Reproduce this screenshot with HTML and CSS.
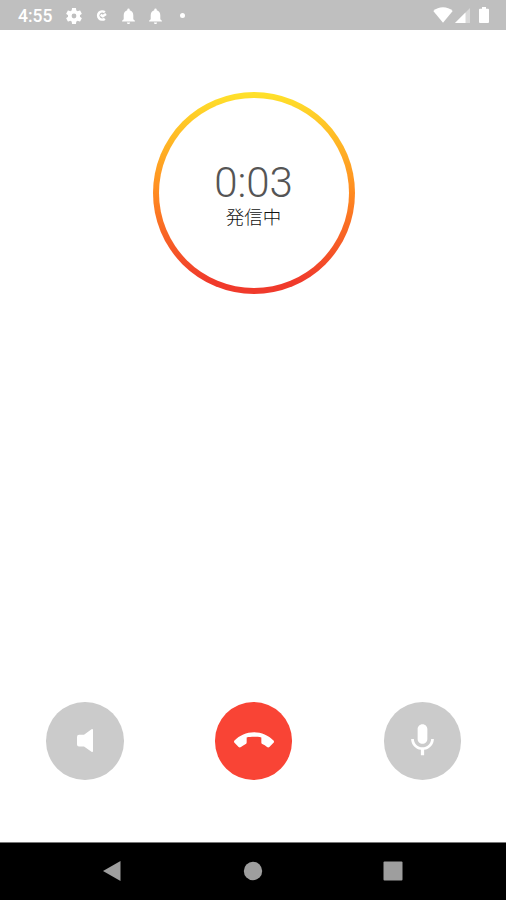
FILE: index.html
```html
<!DOCTYPE html>
<html lang="ja">
<head>
<meta charset="utf-8">
<title>発信中</title>
<link rel="stylesheet" href="styles.css">
</head>
<body>
<div class="phone">
  <header class="status">
    <span class="clock">4:55</span>
    <svg class="gear" viewBox="2 2 20 20"><path d="M19.43 12.98c.04-.32.07-.64.07-.98s-.03-.66-.07-.98l2.11-1.65c.19-.15.24-.42.12-.64l-2-3.46c-.12-.22-.39-.3-.61-.22l-2.49 1c-.52-.4-1.08-.73-1.69-.98l-.38-2.65C14.46 2.18 14.25 2 14 2h-4c-.25 0-.46.18-.49.42l-.38 2.65c-.61.25-1.17.59-1.69.98l-2.49-1c-.23-.09-.49 0-.61.22l-2 3.46c-.13.22-.07.49.12.64l2.11 1.65c-.04.32-.07.65-.07.98s.03.66.07.98l-2.11 1.65c-.19.15-.24.42-.12.64l2 3.46c.12.22.39.3.61.22l2.49-1c.52.4 1.08.73 1.69.98l.38 2.65c.03.24.24.42.49.42h4c.25 0 .46-.18.49-.42l.38-2.65c.61-.25 1.17-.59 1.69-.98l2.49 1c.23.09.49 0 .61-.22l2-3.46c.12-.22.07-.49-.12-.64l-2.11-1.65zM12 15a3 3 0 1 1 0-6 3 3 0 0 1 0 6z"/></svg>
    <svg class="app" viewBox="0 0 11 13"><path d="M8.800 3.300A4.100 4.100 0 1 0 8.800 9.700M4.600 5.700l2.200 1.500 3.200-2.300" fill="none" stroke="#fff" stroke-width="2.500"/></svg>
    <svg class="bell first" viewBox="4 2 16 20"><path d="M12 22c1.100 0 2-.9 2-2h-4c0 1.100.89 2 2 2zm6-6v-5c0-3.070-1.640-5.640-4.500-6.320V4a1.500 1.500 0 0 0-3 0v.68C7.630 5.360 6 7.920 6 11v5l-2 2v1h16v-1z"/></svg>
    <svg class="bell" viewBox="4 2 16 20"><path d="M12 22c1.100 0 2-.9 2-2h-4c0 1.100.89 2 2 2zm6-6v-5c0-3.070-1.640-5.640-4.500-6.320V4a1.500 1.500 0 0 0-3 0v.68C7.630 5.360 6 7.920 6 11v5l-2 2v1h16v-1z"/></svg>
    <span class="dot"></span>
    <svg class="wifi" viewBox="0 0 20 16"><path d="M.3 4Q4.500.3 10 .3T19.700 4L10 15.700z"/></svg>
    <svg class="signal" viewBox="0 0 15 15"><path d="M15 0v15H0z" opacity=".4"/><path d="M10.500 4.500V15H0z"/></svg>
    <svg class="battery" viewBox="0 0 10 16"><path d="M3 0h4v1.700h2q1 0 1 1V15q0 1-1 1H1q-1 0-1-1V2.700q0-1 1-1h2z"/></svg>
  </header>
  <main class="call">
    <section class="ring">
      <div class="info">
        <div class="timer">0:03</div>
        <div class="state">発信中</div>
      </div>
    </section>
    <div class="actions">
      <button class="action" aria-label="スピーカー"><svg class="speaker" viewBox="0 0 16 23"><path d="M2 5.800h5L14.500.3Q16-.3 16 1v21q0 1.300-1.500.7L7 17.500H2q-2 0-2-2V8q0-2.200 2-2.200z"/></svg></button>
      <button class="action end" aria-label="終了"><svg class="hangup" viewBox="0 0 24 24"><path d="M12 9.500c-1.600 0-3.150.1-4.400.4v3c0 .39-.23.74-.56.9-.98.49-2.070 1.120-2.860 1.850-.18.18-.43.28-.7.28-.28 0-.53-.11-.71-.29L.29 13.080a.96.96 0 0 1-.29-.7c0-.28.11-.53.29-.71C3.340 8.580 7.460 6.700 12 6.700s8.660 1.880 11.710 4.970c.18.18.29.43.29.71s-.11.53-.29.71l-2.480 2.550c-.18.18-.43.29-.71.29-.27 0-.52-.11-.7-.28a11.270 11.270 0 0 0-2.860-1.850.99.99 0 0 1-.56-.9v-3C15.150 9.600 13.600 9.500 12 9.500z"/></svg></button>
      <button class="action" aria-label="マイク"><svg class="mic" viewBox="0 0 24 24"><path d="M12 14c1.660 0 2.990-1.340 2.990-3L15 5c0-1.660-1.340-3-3-3S9 3.340 9 5v6c0 1.660 1.340 3 3 3zm5.300-3c0 3-2.540 5.100-5.300 5.100S6.700 14 6.700 11H5c0 3.410 2.720 6.230 6 6.720V21h2v-3.280c3.280-.48 6-3.300 6-6.720h-1.700z"/></svg></button>
    </div>
  </main>
  <nav class="nav">
    <svg viewBox="0 0 20 22"><path d="M18.500 1v20L1 11z"/></svg>
    <svg viewBox="0 0 20 22"><circle cx="10" cy="11" r="9.200"/></svg>
    <svg viewBox="0 0 20 22"><rect x=".5" y="1.500" width="19" height="19" rx="1"/></svg>
  </nav>
</div>
</body>
</html>
```
FILE: styles.css
```css
* { box-sizing: border-box; }
body { margin: 0; background: #fff; font-family: Roboto, "Noto Sans CJK JP", sans-serif; }
svg { display: block; fill: #fff; flex: none; }
.phone { width: 506px; height: 900px; display: flex; flex-direction: column; }
.status { height: 30px; flex: none; background: #bfbfbf; display: flex; align-items: center; padding: 0 17px 0 18px; }
.clock { width: 48px; color: #fff; font-size: 17.500px; font-weight: 500; line-height: 30px; padding-top: 2px; }
.gear { width: 16px; height: 16px; margin-top: 1px; }
.app { width: 11px; height: 13px; margin: 1px 0 0 14px; }
.bell { width: 13px; height: 16px; margin: 1px 0 0 14px; }
.bell.first { margin-left: 15px; }
.dot { width: 5px; height: 5px; border-radius: 50%; background: #fff; margin-left: 18px; }
.wifi { width: 20px; height: 16px; margin-left: auto; }
.signal { width: 15px; height: 15px; margin-left: 2px; }
.battery { width: 10px; height: 16px; margin-left: 9px; }
.call { flex: 1; display: flex; flex-direction: column; justify-content: space-between; align-items: center; padding: 61.500px 0 62.500px 1px; }
.ring { width: 202px; height: 202px; padding: 6px; border-radius: 50%; background: linear-gradient(#ffe22a, #ff8a20 50%, #f03a2b 94%); }
.info { height: 100%; border-radius: 50%; background: #fff; display: flex; flex-direction: column; align-items: center; padding-top: 67px; }
.timer { color: #555; font-size: 42px; font-weight: 300; line-height: 36px; }
.state { color: #111; font-size: 18.500px; line-height: 28px; margin-top: 1px; font-family: "Noto Sans CJK JP", sans-serif; font-weight: 300; }
.actions { width: 415px; display: flex; justify-content: space-between; }
.action { width: 77.500px; height: 77.500px; padding: 0; border: 0; border-radius: 50%; background: #cbcbcb; display: flex; align-items: center; justify-content: center; }
.action.end { background: #f94435; }
.speaker { width: 16px; height: 23px; }
.hangup { width: 40px; height: 40px; }
.mic { width: 39px; height: 39px; }
.nav { height: 58px; flex: none; background: #000; border-top: 1px solid #777; display: flex; justify-content: space-between; padding: 17px 103px 0 102px; }
.nav svg { width: 20px; height: 22px; fill: #9e9e9e; }
```
